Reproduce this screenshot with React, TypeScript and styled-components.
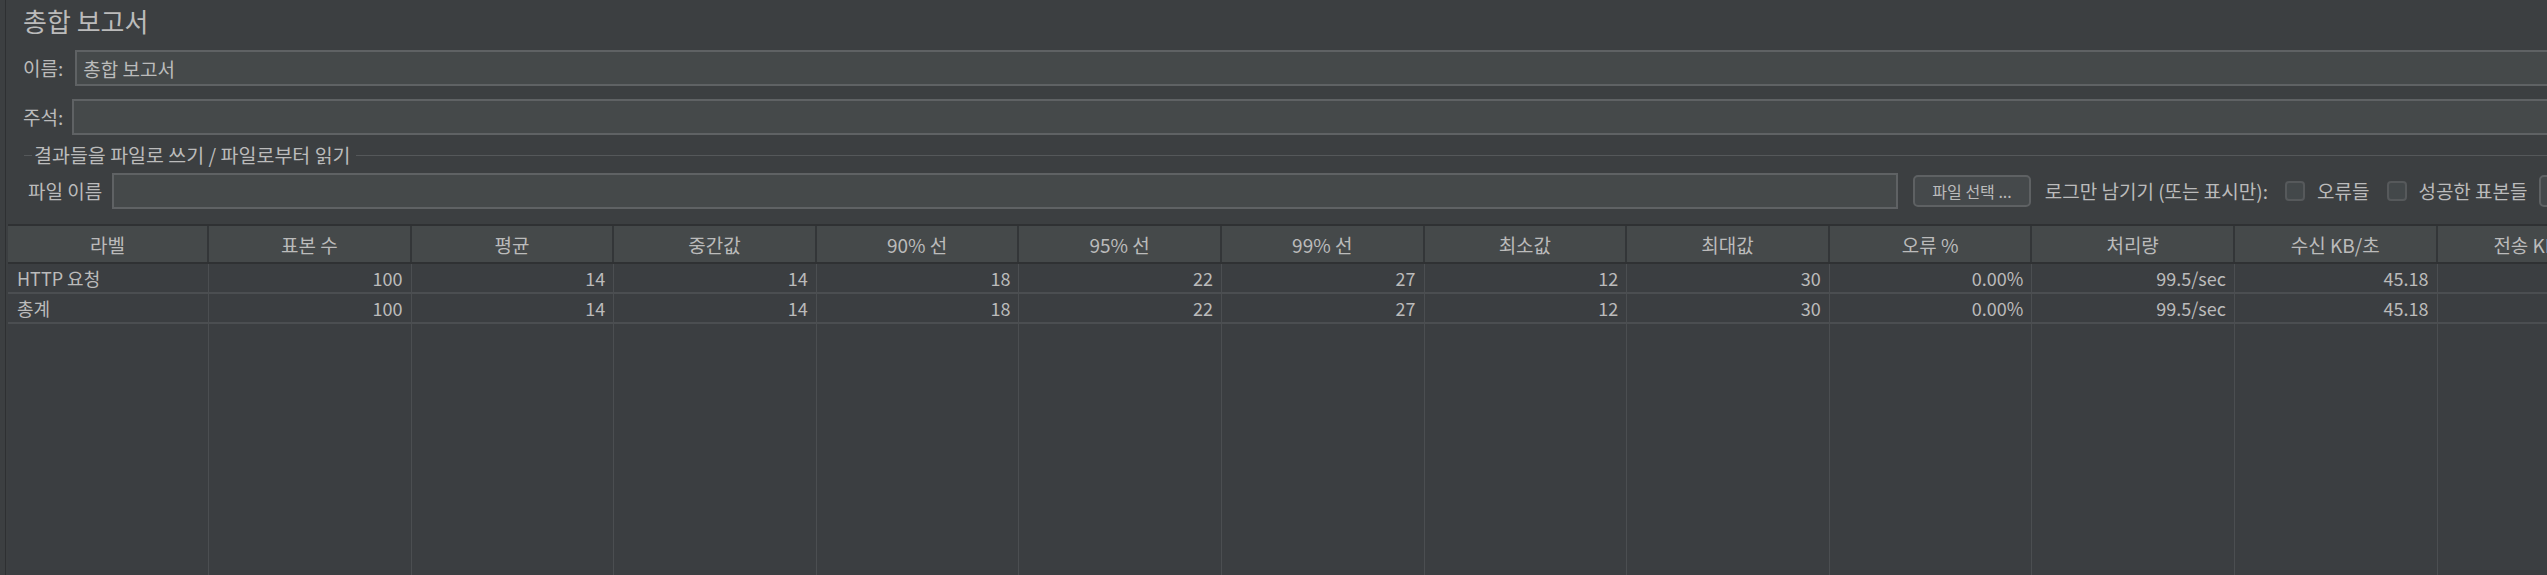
import React from "react";
import styled, { createGlobalStyle } from "styled-components";

const GlobalStyle = createGlobalStyle`
  html, body {
    margin: 0;
    padding: 0;
    background: #3c3f41;
    overflow: hidden;
  }
  body {
    font-family: "Noto Sans CJK KR", "Noto Sans", sans-serif;
    font-size: 19px;
    color: #bbbbbb;
  }
`;

const Root = styled.div`
  display: flex;
  height: 100vh;
  overflow: hidden;
  background: #3c3f41;
`;

const Gutter = styled.div`
  flex: 0 0 5px;
  border-right: 1px solid #2e3032;
`;

const Panel = styled.div`
  flex: 0 0 2650px;
  display: flex;
  flex-direction: column;
  padding-left: 2px;
  min-height: 0;
`;

const Top = styled.div`
  display: flex;
  flex-direction: column;
  padding-left: 15px;
`;

const Title = styled.div`
  font-size: 26px;
  line-height: 32px;
  margin-top: 5px;
  color: #bbbbbb;
`;

const FieldRow = styled.div<{ $top: number; $gap: number }>`
  display: flex;
  align-items: center;
  margin-top: ${(p) => p.$top}px;
  gap: ${(p) => p.$gap}px;
`;

const Label = styled.span`
  font-size: 19px;
  line-height: 24px;
  white-space: nowrap;
`;

const TextInput = styled.div`
  flex: 1;
  height: 36px;
  box-sizing: border-box;
  border: 2px solid #5f6264;
  background: #45494a;
  display: flex;
  align-items: center;
  padding-left: 6px;
  font-size: 19px;
  color: #bbbbbb;
`;

const Fieldset = styled.div`
  display: flex;
  flex-direction: column;
  margin: 8px 52px 0 16px;
`;

const Legend = styled.div`
  display: flex;
  align-items: center;
  height: 24px;
`;

const LegendLine = styled.div<{ $grow?: boolean }>`
  height: 1px;
  background: #55585a;
  ${(p) => (p.$grow ? "flex: 1;" : "flex: 0 0 8px;")}
`;

const LegendText = styled.span`
  padding: 0 5px 0 2px;
  font-size: 19.5px;
  line-height: 24px;
  white-space: nowrap;
`;

const FileRow = styled.div`
  display: flex;
  align-items: center;
  margin-top: 6px;
  padding-left: 4px;
`;

const FileInputWrap = styled.div`
  flex: 1;
  display: flex;
  margin-left: 10px;
`;

const Button = styled.div<{ $ml: number }>`
  flex: 0 0 auto;
  height: 32px;
  box-sizing: border-box;
  margin-left: ${(p) => p.$ml}px;
  padding: 0 17px;
  border: 2px solid #5e6163;
  border-radius: 5px;
  background: #45494b;
  display: flex;
  align-items: center;
  font-size: 16px;
  white-space: nowrap;
`;

const Spaced = styled.span<{ $ml: number }>`
  margin-left: ${(p) => p.$ml}px;
  font-size: 19px;
  line-height: 24px;
  white-space: nowrap;
`;

const Check = styled.span<{ $ml: number }>`
  flex: 0 0 20px;
  height: 20px;
  box-sizing: border-box;
  margin-left: ${(p) => p.$ml}px;
  border: 2px solid #56595b;
  border-radius: 4px;
  background: #43484a;
`;

const COLS = "201px repeat(12, 202.6px)";

const Table = styled.div`
  flex: 1;
  display: flex;
  flex-direction: column;
  margin-top: 15px;
  border-top: 2px solid #2f3133;
  background: #3b3e41;
  min-height: 0;
`;

const HeadRow = styled.div`
  display: grid;
  grid-template-columns: ${COLS};
  height: 38px;
  box-sizing: border-box;
  background: #45494a;
  border-bottom: 2px solid #2f3133;
`;

const HeadCell = styled.div`
  display: flex;
  align-items: center;
  justify-content: center;
  border-right: 2px solid #333638;
  font-size: 19px;
  white-space: nowrap;
  overflow: hidden;
`;

const BodyRow = styled.div`
  display: grid;
  grid-template-columns: ${COLS};
  height: 30px;
  box-sizing: border-box;
  border-bottom: 2px solid #4b4e51;
`;

const Cell = styled.div<{ $left?: boolean }>`
  display: flex;
  align-items: center;
  justify-content: ${(p) => (p.$left ? "flex-start" : "flex-end")};
  padding: 0 8px 0 9px;
  border-right: 1px solid #4b4e51;
  font-size: 18px;
  white-space: nowrap;
  overflow: hidden;
`;

const Filler = styled.div`
  flex: 1;
  display: grid;
  grid-template-columns: ${COLS};
`;

const FillCell = styled.div`
  border-right: 1px solid #4b4e51;
`;

const headers = [
  "라벨",
  "표본 수",
  "평균",
  "중간값",
  "90% 선",
  "95% 선",
  "99% 선",
  "최소값",
  "최대값",
  "오류 %",
  "처리량",
  "수신 KB/초",
  "전송 KB/초",
];

const rows = [
  ["HTTP 요청", "100", "14", "14", "18", "22", "27", "12", "30", "0.00%", "99.5/sec", "45.18", "8.74"],
  ["총계", "100", "14", "14", "18", "22", "27", "12", "30", "0.00%", "99.5/sec", "45.18", "8.74"],
];

export default function App() {
  return (
    <>
      <GlobalStyle />
      <Root>
        <Gutter />
        <Panel>
          <Top>
            <Title>총합 보고서</Title>
            <FieldRow $top={13} $gap={12}>
              <Label>이름:</Label>
              <TextInput>총합 보고서</TextInput>
            </FieldRow>
            <FieldRow $top={13} $gap={9}>
              <Label>주석:</Label>
              <TextInput />
            </FieldRow>
          </Top>
          <Fieldset>
            <Legend>
              <LegendLine />
              <LegendText>결과들을 파일로 쓰기 / 파일로부터 읽기</LegendText>
              <LegendLine $grow />
            </Legend>
            <FileRow>
              <Label>파일 이름</Label>
              <FileInputWrap>
                <TextInput />
              </FileInputWrap>
              <Button $ml={15}>파일 선택 ...</Button>
              <Spaced $ml={14}>로그만 남기기 (또는 표시만):</Spaced>
              <Check $ml={17} />
              <Spaced $ml={12}>오류들</Spaced>
              <Check $ml={18} />
              <Spaced $ml={11}>성공한 표본들</Spaced>
              <Button $ml={11}>설정</Button>
            </FileRow>
          </Fieldset>
          <Table>
            <HeadRow>
              {headers.map((h) => (
                <HeadCell key={h}>{h}</HeadCell>
              ))}
            </HeadRow>
            {rows.map((r, i) => (
              <BodyRow key={i}>
                {r.map((c, j) => (
                  <Cell key={j} $left={j === 0}>
                    {c}
                  </Cell>
                ))}
              </BodyRow>
            ))}
            <Filler>
              {headers.map((h) => (
                <FillCell key={h} />
              ))}
            </Filler>
          </Table>
        </Panel>
      </Root>
    </>
  );
}
